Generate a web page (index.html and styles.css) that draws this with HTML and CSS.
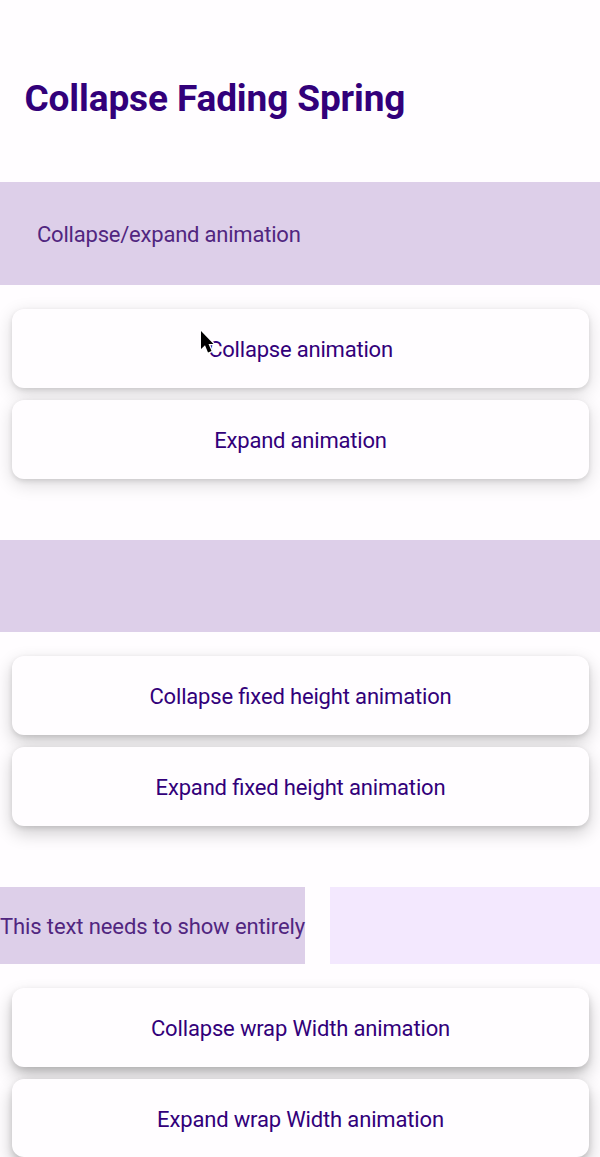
FILE: index.html
```html
<!DOCTYPE html>
<html lang="en"><head><meta charset="utf-8"><title>Collapse Fading Spring</title><link rel="stylesheet" href="styles.css"></head>
<body>
<main class="screen">
<h1 class="title">Collapse Fading Spring</h1>
<section class="group">
<div class="panel panel-text"><span>Collapse/expand animation</span></div>
<div class="buttons low"><button class="btn short"><span>Collapse animation</span><svg class="cursor" viewBox="0 0 18 28" width="18" height="28"><path d="M2 3V21L6 17.300L9 24.500L12.500 23L9.500 16H14.500Z" fill="#000" stroke="#fff" stroke-width="2.600" stroke-linejoin="round" paint-order="stroke"/></svg></button>
<button class="btn short"><span>Expand animation</span></button></div>
</section>
<section class="group">
<div class="panel panel-fixed"></div>
<div class="buttons mid"><button class="btn"><span>Collapse fixed height animation</span></button><button class="btn"><span>Expand fixed height animation</span></button></div>
</section>
<section class="group last">
<div class="row"><div class="wrap"><span>This text needs to show entirely</span></div><div class="filler"></div></div>
<div class="buttons high"><button class="btn"><span>Collapse wrap Width animation</span></button><button class="btn"><span>Expand wrap Width animation</span></button></div>
</section>
</main>
</body></html>
```
FILE: styles.css
```css
* { box-sizing: border-box; }
body { margin: 0; background: #fffdff; font-family: Roboto, sans-serif; color: #32007a; }
.screen { height: 1157px; overflow: hidden; }
.title { margin: 0; height: 182px; padding: 77px 0 0 24.5px; font-size: 37px; line-height: 44px; font-weight: 700; letter-spacing: -.12px; white-space: nowrap; }
.group { margin-bottom: 61px; }
.panel { background: #ddcfe9; display: flex; align-items: center; }
.panel-text { height: 103px; padding: 2px 37px 0; font-size: 22px; letter-spacing: -.21px; color: #512680; }
.panel-fixed { height: 92px; }
.buttons { display: flex; flex-direction: column; gap: 12px; padding: 24px 11px 0 12px; }
.btn { position: relative; height: 79px; flex: none; border: 0; border-radius: 12px; background: #fffdff; color: #32007a; font: 400 22px Roboto, sans-serif; font-feature-settings: "liga" 1; letter-spacing: -.16px; padding: 2px 0 0; }
.short { letter-spacing: -.2px; }
.low .btn { box-shadow: 0 5px 18px rgba(0,0,0,.15), 0 2px 5px rgba(0,0,0,.11); }
.mid .btn { box-shadow: 0 7px 18px rgba(0,0,0,.2), 0 2px 5px rgba(0,0,0,.11); }
.high .btn { box-shadow: 0 9px 18px rgba(0,0,0,.23), 0 3px 6px rgba(0,0,0,.12); }
.cursor { position: absolute; left: 187px; top: 19px; }
.row { display: flex; gap: 25px; height: 77px; }
.wrap { width: 305px; background: #ddcfe9; color: #512680; font-size: 22px; letter-spacing: -.11px; display: flex; align-items: center; white-space: nowrap; padding-top: 2px; }
.filler { flex: 1; background: #f3e8fe; }
.last .btn { height: 78.5px; padding-top: 2.5px; }
```
